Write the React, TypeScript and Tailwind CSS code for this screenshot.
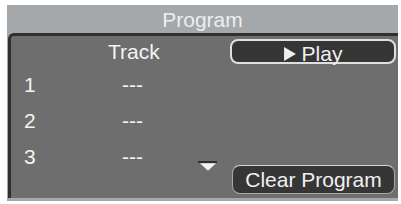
const rows = ['1', '2', '3'];

function PlayIcon() {
  return (
    <svg className="h-[14px] w-[12px]" viewBox="0 0 11 13" fill="currentColor">
      <path d="M0 0 L11 6.5 L0 13 Z" />
    </svg>
  );
}

export default function App() {
  return (
    <div
      className="h-[204px] w-[401px] bg-white pl-[7px] pt-[5px]"
      style={{ fontFamily: '"Liberation Sans", Arial, sans-serif' }}
    >
      <div className="flex h-[196px] w-[391px] flex-col bg-[#a5a8aa]">
        {/* Title */}
        <div className="flex h-[28px] items-center justify-center text-[21px] leading-none text-[#eeeeee]">
          Program
        </div>

        {/* Panel */}
        <div className="relative mb-[3px] ml-[1px] flex flex-1 rounded-tl-[6px] border-l-[3px] border-t-[3px] border-[#2f2f2f] bg-[#6e6e6e] text-[21px] leading-none text-[#f4f4f4]">
          <div className="flex w-[214px] flex-col">
            <div className="flex h-[30px] items-center pl-[97px]">Track</div>
            {rows.map((n) => (
              <div key={n} className="flex h-[36px] items-center">
                <span className="w-[111px] pl-[13px]">{n}</span>
                <span>---</span>
              </div>
            ))}
          </div>

          {/* scroll hint */}
          <div className="absolute left-[187px] top-[125px] flex flex-col items-center">
            <div className="h-[2px] w-[19px] bg-[#2f2f2f]" />
            <svg className="h-[8px] w-[16px]" viewBox="0 0 15 7" fill="#f4f4f4">
              <path d="M0 0 L15 0 L7.5 7 Z" />
            </svg>
          </div>

          <div className="flex flex-1 flex-col justify-between pb-[4px] pl-[5px] pr-[2px] pt-[3px]">
            <button className="flex h-[25px] w-[166px] items-center justify-center gap-[6px] rounded-[8px] border-2 border-[#e0e0e0] bg-[#363636] pt-[4px] text-[21px] leading-none text-[#f0f0f0]">
              <PlayIcon />
              <span>Play</span>
            </button>
            <button className="ml-[2px] flex h-[29px] w-[163px] items-center justify-center rounded-[8px] border-[1.5px] border-[#a8a8a8] border-t-[#d8d8d8] bg-[#363636] text-[21px] leading-none text-[#f0f0f0]">
              Clear Program
            </button>
          </div>
        </div>
      </div>
    </div>
  );
}
